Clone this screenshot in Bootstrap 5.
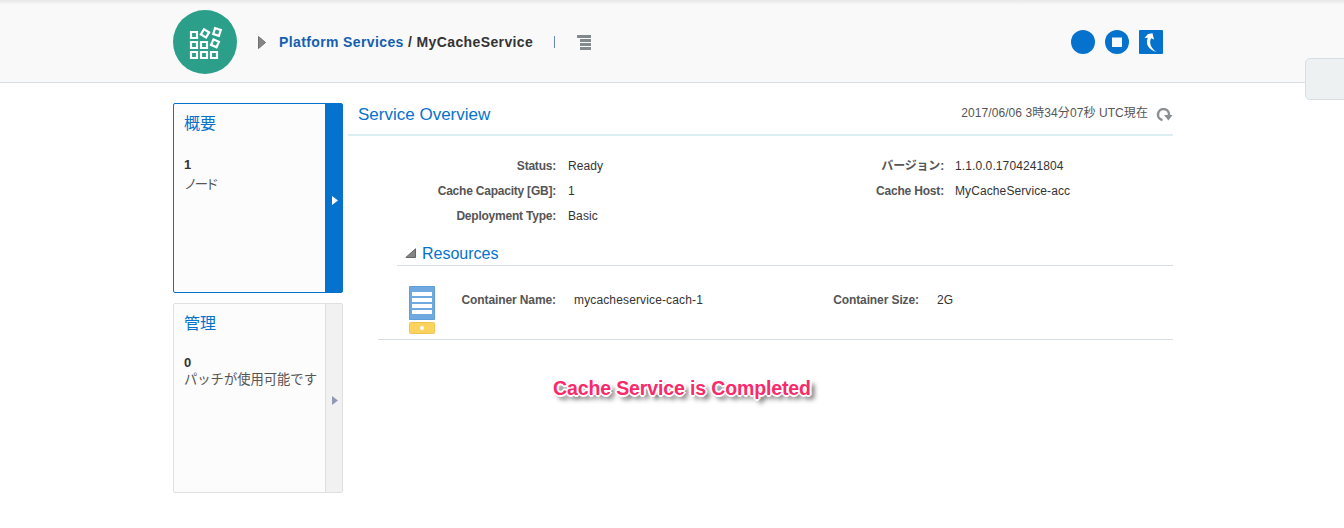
<!DOCTYPE html>
<html lang="ja">
<head>
<meta charset="utf-8">
<meta name="viewport" content="width=device-width, initial-scale=1">
<title>MyCacheService</title>
<link href="https://cdn.jsdelivr.net/npm/bootstrap@5.3.0/dist/css/bootstrap.min.css" rel="stylesheet">
<style>
body{font-family:"Liberation Sans","Noto Sans CJK JP",sans-serif;font-size:12px;line-height:16px;color:#333;background:#fff;overflow:hidden}
svg{display:block;flex:none}
.shell{width:1000px;margin-left:173px}
.topbar{height:83px;background:linear-gradient(#e7e7e7,#f9f9f9 5px);border-bottom:1px solid #d6dfe6}
.topbar .shell{height:82px;padding:2px 10px 0 0}
.caret{margin-left:21px}
.crumbs{font-size:14px;font-weight:700;margin-left:13px;letter-spacing:.38px;line-height:20px}
.crumbs a{color:#145fb0}
.divider{width:1px;height:12px;background:#6d89b3;margin-left:21px}
.menu-icon{margin-left:22px}
.actions{gap:10px}
.side-tab{right:-6px;top:58px;width:45px;height:42px;background:#edf1f2;border:1px solid #d6dfe6;border-radius:5px}
.tiles{width:170px;gap:10px;margin-top:20px}
.tile{height:190px;background:#fcfcfc;border:1px solid #dfdfdf;border-radius:2px;color:#555}
.tile-text{padding:10px 0 0 10px}
.tile h2{font-size:16px;line-height:20px;margin:0 0 20px;color:#0572ce;font-weight:400}
.tile b{color:#333;line-height:18px;font-size:13px}
.tile-text span{font-size:13.3px;line-height:16px;white-space:nowrap}
.tile.on h2{margin-bottom:22px}
.on .tile-text span{line-height:21px;letter-spacing:-2.500px}
.strip{width:17px;background:#f1f1f1;border-left:1px solid #dfdfdf;padding:4px 0 0 1px}
.tile.on{border-color:#0572ce}
.on .strip{background:#0572ce;border-color:#0572ce}
.main{width:825px;margin-left:5px}
.title-row{height:53px;border-bottom:2px solid #dceef2;padding:22px 0 0 10px}
.title-row h1,.res h3{font-size:17px;line-height:20px;color:#0572ce;font-weight:400;margin:0}
.stamp{color:#555;gap:8px;letter-spacing:.08px}
.refresh{margin-top:3px}
.facts{padding-top:18px}
.facts-left{width:387px}
.line{height:25px;line-height:25px}
.key{font-weight:700;color:#555;text-align:right;white-space:nowrap;width:208px;letter-spacing:-.22px}
.val{margin-left:12px;letter-spacing:.1px}
.right-key{width:209px;letter-spacing:-.18px}
.right-key + .val{margin-left:11px}
.res{margin-left:49px;height:37px;border-bottom:1px solid #d6dfe6;padding:15px 0 0 8px;gap:6px}
.res h3{font-size:16px}
.fold{margin-top:4px}
.node{margin-left:30px;height:74px;border-bottom:1px solid #d6dfe6;padding:20px 0 0 31px}
.node .key{width:121px;padding-top:6px;letter-spacing:-.1px}
.node-val{padding:6px 0 0 18px}
.node-name{width:242px;letter-spacing:.14px}
.callout{font-size:19.5px;line-height:24px;font-weight:700;color:#fa2a6a;margin:36px 0 0 205px;letter-spacing:-.13px;text-shadow:-1px -1px #fff,1px -1px #fff,-1px 1px #fff,1px 1px #fff,0 2px #fff,2px 0 #fff,-2px 0 #fff,0 -2px #fff,4px 4px 5px rgba(0,0,0,.8)}
</style>
</head>
<body class="position-relative">
<header class="topbar">
  <div class="shell d-flex align-items-center">
    <svg width="64" height="64" viewBox="0 0 64 64"><circle cx="32" cy="32" r="32" fill="#2b9f8a"/><g fill="none" stroke="#fff" stroke-width="2.200"><path d="M18 22h6v6h-6zM18 32h6v6h-6zM28 32h6v6h-6zM18 42h6v6h-6zM28 42h6v6h-6zM38 42h6v6h-6z"/><path d="M-3-3h6v6h-6z" transform="translate(32 23.3) rotate(31)"/><path d="M-3-3h6v6h-6z" transform="translate(44 22) rotate(18)"/><path d="M-3-3h6v6h-6z" transform="translate(42 33.3) rotate(24)"/></g></svg>
    <svg class="caret" width="8" height="13"><path d="M.5.5 7.5 6.5l-7 6z" fill="#858585" stroke="#707070"/></svg>
    <nav class="crumbs"><a class="text-decoration-none" href="#">Platform Services</a> / <span>MyCacheService</span></nav>
    <span class="divider"></span>
    <svg class="menu-icon" width="15" height="15"><path d="M0 0h14v3H0zM3 4h11v3H3zM3 8h11v3H3zM3 12h11v3H3z" fill="#838a8d"/></svg>
    <div class="actions d-flex ms-auto">
      <svg width="24" height="24"><circle cx="12" cy="12" r="12" fill="#0572ce"/></svg>
      <svg width="24" height="24"><circle cx="12" cy="12" r="12" fill="#0572ce"/><path d="M7 7.5h10v9.5H7z" fill="#f8fbfe"/></svg>
      <svg width="24" height="24"><rect width="24" height="24" rx="1" fill="#0572ce"/><path d="M5.500 8 9 4 13.500 3.200 15 9.500 12 8.300C10 13 11.500 18 17.500 22 10 20 6 14.500 8.800 7.800z" fill="#fff"/></svg>
    </div>
  </div>
</header>
<div class="side-tab position-absolute"></div>
<div class="shell d-flex">
  <aside class="tiles d-flex flex-column flex-shrink-0">
    <section class="tile on d-flex"><div class="tile-text flex-fill d-flex flex-column"><h2>概要</h2><b>1</b><span>ノード</span></div><div class="strip d-flex align-items-center justify-content-center"><svg width="6" height="9"><path d="M0 0 6 4.500 0 9z" fill="#fff"/></svg></div></section>
    <section class="tile d-flex"><div class="tile-text flex-fill d-flex flex-column"><h2>管理</h2><b>0</b><span>パッチが使用可能です</span></div><div class="strip d-flex align-items-center justify-content-center"><svg width="6" height="9"><path d="M0 0 6 4.500 0 9z" fill="#9298b5"/></svg></div></section>
  </aside>
  <main class="main flex-shrink-0">
    <div class="title-row d-flex justify-content-between"><h1>Service Overview</h1><div class="stamp d-flex"><span>2017/06/06 3時34分07秒 UTC現在</span><svg class="refresh" width="17" height="14"><path d="M6.500 12A5.500 5.500 0 1 1 13 7" fill="none" stroke="#8b8f91" stroke-width="2.500"/><path d="M8 7h8.500l-4 5.500z" fill="#8b8f91"/></svg></div></div>
    <div class="facts d-flex">
      <div class="facts-left">
        <div class="line d-flex"><div class="key">Status:</div><div class="val">Ready</div></div>
        <div class="line d-flex"><div class="key">Cache Capacity [GB]:</div><div class="val">1</div></div>
        <div class="line d-flex"><div class="key">Deployment Type:</div><div class="val">Basic</div></div>
      </div>
      <div>
        <div class="line d-flex"><div class="key right-key">バージョン:</div><div class="val">1.1.0.0.1704241804</div></div>
        <div class="line d-flex"><div class="key right-key">Cache Host:</div><div class="val">MyCacheService-acc</div></div>
      </div>
    </div>
    <div class="res d-flex"><svg class="fold" width="11" height="10"><path d="M.8 9.500H10.500V.8z" fill="#858585" stroke="#666"/></svg><h3>Resources</h3></div>
    <div class="node d-flex">
      <svg width="26" height="48"><path d="M.5.5h25v33H.5z" fill="#70a9e0" stroke="#5f9fd9"/><path d="M3 6h20v4H3zM3 12h20v4H3zM3 18h20v4H3zM3 24h20v4H3z" fill="#fff"/><rect x=".5" y="36.500" width="25" height="11" rx="1" fill="#fcd35e" stroke="#efc452"/><circle cx="13" cy="42" r="2" fill="#fff"/></svg>
      <div class="key">Container Name:</div><div class="node-val node-name">mycacheservice-cach-1</div>
      <div class="key">Container Size:</div><div class="node-val">2G</div>
    </div>
    <div class="callout">Cache Service is Completed</div>
  </main>
</div>
<script src="https://cdn.jsdelivr.net/npm/bootstrap@5.3.0/dist/js/bootstrap.bundle.min.js"></script>
</body>
</html>
